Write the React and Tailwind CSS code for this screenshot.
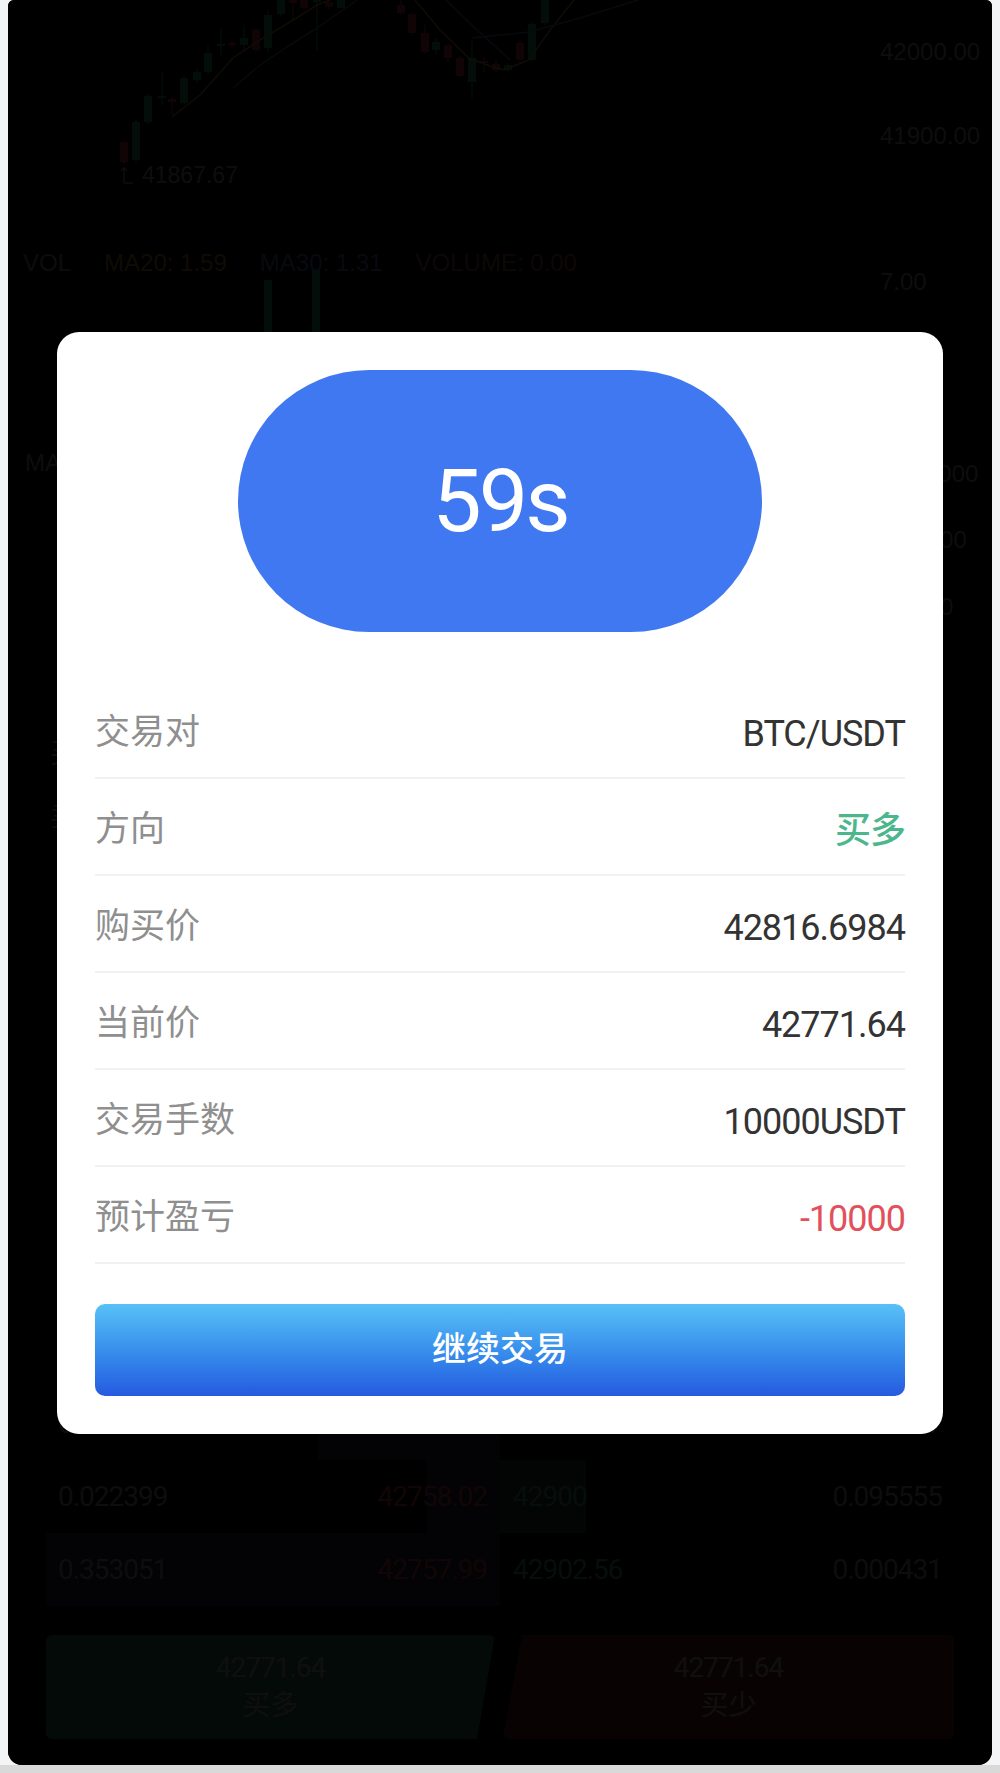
import React from 'react';

const candles = [
  [120, 142, 162, 140, 164, 'r'], [132, 122, 160, 120, 162, 'g'], [144, 96, 122, 94, 124, 'g'],
  [158, 96, 98, 72, 105, 'g'], [168, 99, 102, 97, 115, 'r'], [180, 78, 103, 76, 105, 'g'],
  [193, 72, 80, 68, 82, 'g'], [204, 53, 72, 46, 74, 'g'], [217, 44, 46, 29, 55, 'g'],
  [228, 43, 45, 41, 47, 'r'], [240, 38, 45, 25, 50, 'g'], [252, 30, 50, 28, 52, 'r'],
  [264, 15, 48, 10, 52, 'g'], [277, 0, 14, 0, 16, 'g'], [289, 0, 3, 0, 20, 'r'],
  [300, 0, 8, 0, 10, 'r'], [313, 0, 2, 0, 50, 'g'], [325, 2, 7, 0, 9, 'r'],
  [337, 0, 8, 0, 8, 'g'], [397, 5, 13, 0, 15, 'r'], [408, 14, 33, 12, 35, 'r'],
  [421, 33, 52, 25, 54, 'r'], [432, 42, 50, 38, 55, 'g'], [444, 45, 58, 43, 62, 'r'],
  [456, 58, 76, 56, 78, 'r'], [468, 58, 82, 40, 98, 'g'], [480, 61, 63, 57, 72, 'r'],
  [492, 64, 70, 60, 72, 'r'], [504, 65, 70, 63, 72, 'g'], [516, 43, 60, 40, 62, 'r'],
  [528, 24, 60, 22, 62, 'g'], [541, 0, 23, 0, 25, 'g'],
];

const book = [
  { bidQty: '0.017425', bid: '42758.56', ask: '42899.10', askQty: '0.001417', bidDepth: 40, askDepth: 0 },
  { bidQty: '0.022399', bid: '42758.02', ask: '42900', askQty: '0.095555', bidDepth: 16, askDepth: 19 },
  { bidQty: '0.353051', bid: '42757.99', ask: '42902.56', askQty: '0.000431', bidDepth: 100, askDepth: 0 },
];

const rows = [
  { label: '交易对', value: 'BTC/USDT', tone: 'text-[#333333]' },
  { label: '方向', value: '买多', tone: 'text-[#4cb78c] font-medium' },
  { label: '购买价', value: '42816.6984', tone: 'text-[#333333]' },
  { label: '当前价', value: '42771.64', tone: 'text-[#333333]' },
  { label: '交易手数', value: '10000USDT', tone: 'text-[#333333]' },
  { label: '预计盈亏', value: '-10000', tone: 'text-[#e2515b]' },
];

const KlineChart = () => (
  <div className="relative h-[248px] font-['Liberation_Sans',sans-serif]">
    <svg className="absolute inset-0" width="984" height="248">
      <g transform="translate(-8,0)">
        {candles.map(([x, t, b, wt, wb, c], i) => (
          <g key={i} fill={c === 'g' ? '#2fae82' : '#d63c55'} stroke={c === 'g' ? '#2fae82' : '#d63c55'}>
            <line x1={x + 4} x2={x + 4} y1={wt} y2={wb} strokeWidth="1.2" />
            <rect x={x} y={t} width="8" height={Math.max(b - t, 2)} stroke="none" />
          </g>
        ))}
        <path d="M172 117 L200 95 L233 58 L260 40 L290 22 L317 5 L330 0" fill="none" stroke="#c8923a" strokeWidth="1.5" />
        <path d="M415 0 L440 30 L469 58 L490 66 L504 70 L529 60 L550 30 L574 0" fill="none" stroke="#c8923a" strokeWidth="1.5" />
        <path d="M233 88 L260 65 L290 45 L317 28 L340 12 L357 0" fill="none" stroke="#5a6fb0" strokeWidth="1.5" />
        <path d="M446 0 L475 28 L510 60" fill="none" stroke="#5a6fb0" strokeWidth="1.5" />
        <path d="M472 38 L529 32 L580 18 L638 0" fill="none" stroke="#5a6fb0" strokeWidth="1.5" />
      </g>
    </svg>
    <div className="absolute left-[112px] top-[162px] flex items-center gap-[8px] text-[23px] leading-[26px] text-[#a3a3a3]">
      <svg width="14" height="18" viewBox="0 0 14 18" fill="none" stroke="#a3a3a3" strokeWidth="1.6">
        <path d="M4 17 V2 M1 5 L4 2 L7 5 M4 17 H13" />
      </svg>
      <span>41867.67</span>
    </div>
    <div className="absolute left-[872px] top-[38px] text-[24px] leading-[28px] text-[#a3a3a3]">42000.00</div>
    <div className="absolute left-[872px] top-[122px] text-[24px] leading-[28px] text-[#a3a3a3]">41900.00</div>
  </div>
);

const VolumeChart = () => (
  <>
    <div className="flex h-[30px] items-center gap-[33px] pl-[15px] font-['Liberation_Sans',sans-serif] text-[24px] text-[#9a9aa6]">
      <span>VOL</span>
      <span className="text-[#c08a40]">MA20: 1.59</span>
      <span className="text-[#6a76b8]">MA30: 1.31</span>
      <span className="text-[#a85a5a]">VOLUME: 0.00</span>
    </div>
    <div className="relative h-[170px] font-['Liberation_Sans',sans-serif]">
      <svg className="absolute inset-0 overflow-visible" width="984" height="170">
        <rect x="256" y="2" width="8" height="168" fill="#2fae82" />
        <rect x="304" y="-8" width="8" height="178" fill="#2fae82" />
      </svg>
      <div className="absolute left-[872px] top-[-10px] text-[24px] leading-[28px] text-[#a3a3a3]">7.00</div>
    </div>
    <div className="flex h-[30px] items-center pl-[17px] font-['Liberation_Sans',sans-serif] text-[24px] text-[#9a9aa6]">
      MACD(12,26,9)
    </div>
    <div className="relative h-[162px] font-['Liberation_Sans',sans-serif] text-[24px] leading-[24px] text-[#a3a3a3]">
      <div className="absolute left-[872px] top-[-16px]">11.00000</div>
      <div className="absolute left-[872px] top-[50px]">5.50000</div>
      <div className="absolute left-[872px] top-[117px]">0.0000</div>
    </div>
  </>
);

const OrderBook = () => (
  <div className="px-[38px] text-[28px] tracking-[-1px]">
    {book.map((r, i) => (
      <div key={i} className="grid h-[73px] grid-cols-2">
        <div className="relative flex items-center justify-between pl-[12px] pr-[13px]">
          <div className="absolute inset-y-0 right-0 bg-[#2a1943]" style={{ width: `${r.bidDepth}%` }} />
          <span className="relative text-[#a0a0a0]">{r.bidQty}</span>
          <span className="relative text-[#d04848]">{r.bid}</span>
        </div>
        <div className="relative flex items-center justify-between pl-[13px] pr-[12px]">
          <div className="absolute inset-y-0 left-0 bg-[#194232]" style={{ width: `${r.askDepth}%` }} />
          <span className="relative text-[#3fae80]">{r.ask}</span>
          <span className="relative text-[#a0a0a0]">{r.askQty}</span>
        </div>
      </div>
    ))}
  </div>
);

const TradeButtons = () => (
  <div className="mt-[29px] flex gap-[8px] px-[38px] text-[28px] leading-[38px] text-[#bbbbbb]">
    <div className="flex h-[104px] w-[449px] flex-col items-center justify-center rounded-[6px] bg-[#32855f] [clip-path:polygon(0_0,100%_0,calc(100%-18px)_100%,0_100%)]">
      <span className="tracking-[-1px]">42771.64</span>
      <span>买多</span>
    </div>
    <div className="flex h-[104px] flex-1 flex-col items-center justify-center rounded-[6px] bg-[#75212a] [clip-path:polygon(19px_0,100%_0,100%_100%,0_100%)]">
      <span className="tracking-[-1px]">42771.64</span>
      <span>买少</span>
    </div>
  </div>
);

const ResultModal = () => (
  <div className="w-[886px] rounded-[22px] bg-white p-[38px]">
    <div className="mx-auto flex h-[262px] w-[524px] items-center justify-center rounded-full bg-[#3f78f0]">
      <span className="text-[88px] leading-none tracking-[-3px] text-white">59s</span>
    </div>
    <div className="mt-[50px]">
      {rows.map((r) => (
        <div key={r.label} className="flex h-[97px] items-center justify-between border-b-2 border-[#f1f1f1] pt-[9px]">
          <span className="text-[35px] text-[#8f8f8f]">{r.label}</span>
          <span className={`text-[36px] tracking-[-1px] ${r.tone}`}>{r.value}</span>
        </div>
      ))}
    </div>
    <button className="mt-[40px] flex h-[92px] w-full items-center justify-center rounded-[10px] bg-gradient-to-b from-[#58c1f6] to-[#2759e0] text-[34px] font-medium text-white">
      继续交易
    </button>
  </div>
);

export default function App() {
  return (
    <div className="flex min-h-[1773px] flex-col bg-[#f3f4f6] font-['Roboto','Noto_Sans_CJK_SC',sans-serif]">
      <div className="relative mx-2 h-[1765px] overflow-hidden rounded-t-[6px] rounded-b-[14px] bg-[#030303]">
        <KlineChart />
        <VolumeChart />
        <div className="h-[747px] pl-[42px] pt-[93px] text-[28px] text-[#a0a0a0]">
          <div className="h-[63px]">买</div>
          <div>卖</div>
        </div>
        <OrderBook />
        <TradeButtons />

        {/* dimmed backdrop + result dialog */}
        <div className="absolute inset-0 flex items-center justify-center bg-black/[0.92]">
          <ResultModal />
        </div>
      </div>
      <div className="h-2 bg-[#d9d9d9]" />
    </div>
  );
}
